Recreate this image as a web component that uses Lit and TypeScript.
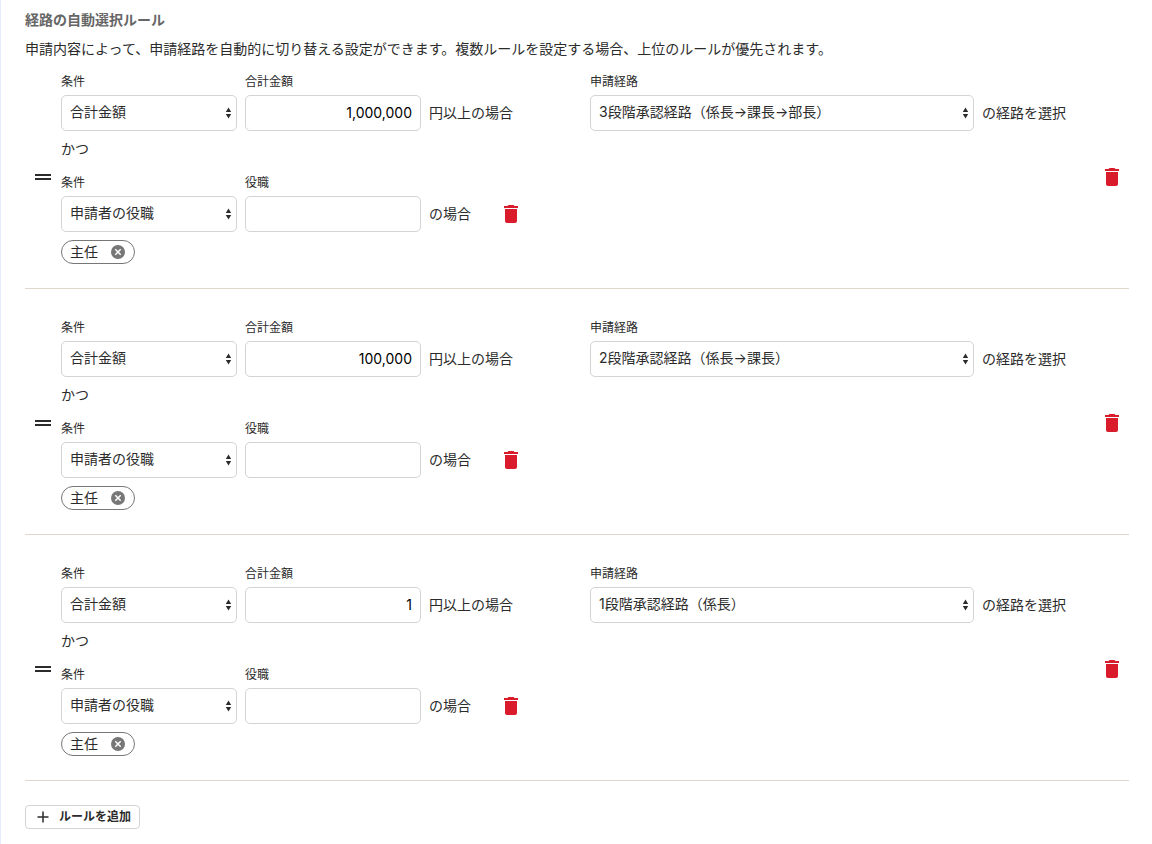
import { LitElement, css, html } from "lit";
import { customElement, property, state } from "lit/decorators.js";

interface Rule {
  id: number;
  amount: string;
  route: string;
  roles: string[];
}

const trashIcon = html`
  <svg width="24" height="24" viewBox="0 0 24 24" fill="currentColor" aria-hidden="true">
    <path d="M6 19c0 1.1.9 2 2 2h8c1.1 0 2-.9 2-2V7H6v12zM19 4h-3.500l-1-1h-5l-1 1H5v2h14V4z" />
  </svg>
`;

@customElement("select-box")
class SelectBox extends LitElement {
  @property() label = "";
  @property({ attribute: false }) options: string[] = [];
  @property() value = "";

  static styles = css`
    :host {
      display: block;
    }
    label {
      display: block;
      font-size: 12px;
      line-height: 22px;
      margin-bottom: 2px;
    }
    .box {
      display: grid;
      align-items: center;
    }
    select {
      grid-area: 1 / 1;
      appearance: none;
      box-sizing: border-box;
      width: 100%;
      height: 36px;
      margin: 0;
      padding: 0 24px 2px 8px;
      border: 1px solid #d4d4d4;
      border-radius: 5px;
      background: #fff;
      color: #2b2b2b;
      font: inherit;
      font-size: 14px;
    }
    svg {
      grid-area: 1 / 1;
      justify-self: end;
      margin-right: 5px;
      pointer-events: none;
    }
  `;

  render() {
    return html`
      <label for="select">${this.label}</label>
      <div class="box">
        <select id="select">
          ${this.options.map((o) => html`<option ?selected=${o === this.value}>${o}</option>`)}
        </select>
        <svg width="7" height="12" viewBox="0 0 7 12" fill="#2b2b2b" aria-hidden="true">
          <path d="M3.500 0.500L6.200 5H0.800zM3.500 11.500L0.800 7H6.200z" />
        </svg>
      </div>
    `;
  }
}

@customElement("app-root")
class AppRoot extends LitElement {
  @state() rules: Rule[] = [
    { id: 1, amount: "1,000,000", route: "3段階承認経路（係長→課長→部長）", roles: ["主任"] },
    { id: 2, amount: "100,000", route: "2段階承認経路（係長→課長）", roles: ["主任"] },
    { id: 3, amount: "1", route: "1段階承認経路（係長）", roles: ["主任"] },
  ];

  static styles = css`
    :host {
      display: block;
      box-sizing: border-box;
      min-height: 100vh;
      padding: 10px 23px 15px 24px;
      border-left: 1px solid #e4eefc;
      background: #fff;
      color: #2b2b2b;
      font-family: Inter, "Noto Sans CJK JP", sans-serif;
      font-size: 14px;
      line-height: 20px;
    }
    h2 {
      margin: 0 0 8px;
      color: #666;
      font-size: 14px;
      font-weight: 700;
    }
    p {
      margin: 0;
    }
    .lead {
      margin-bottom: 8px;
      line-height: 21px;
    }
    ul {
      margin: 0;
      padding: 0;
      list-style: none;
    }
    button {
      display: inline-flex;
      align-items: center;
      justify-content: center;
      margin: 0;
      padding: 0;
      border: 0;
      background: none;
      color: inherit;
      font: inherit;
      cursor: pointer;
    }
    .rule {
      display: flex;
      align-items: center;
      padding-bottom: 2px;
      border-bottom: 1px solid #ddd8c9;
    }
    .rule + .rule {
      padding-top: 24px;
    }
    .handle {
      width: 36px;
      height: 24px;
      cursor: move;
    }
    .trash {
      width: 32px;
      height: 24px;
      color: #da1b2b;
    }
    .rule > .trash {
      width: 34px;
    }
    .content {
      flex: 1;
      display: grid;
      grid-template-columns: 1fr 1fr;
      gap: 24px;
      padding: 4px 0 22px;
    }
    .row {
      display: flex;
      align-items: flex-end;
      gap: 8px;
    }
    .short {
      width: 176px;
    }
    .long {
      flex: 0 1 384px;
    }
    .field label {
      display: block;
      margin-bottom: 2px;
      font-size: 12px;
      line-height: 22px;
    }
    input {
      display: block;
      box-sizing: border-box;
      width: 100%;
      height: 36px;
      margin: 0;
      padding: 0 8px 2px;
      border: 1px solid #d4d4d4;
      border-radius: 5px;
      background: #fff;
      color: #000;
      font: inherit;
    }
    .amount {
      text-align: right;
    }
    .suffix {
      display: flex;
      align-items: center;
      gap: 24px;
      height: 36px;
      white-space: nowrap;
    }
    .and {
      margin: 8px 0 13px;
    }
    .chips {
      display: flex;
      gap: 8px;
      margin-top: 8px;
    }
    .chip {
      display: flex;
      align-items: center;
      gap: 12px;
      box-sizing: border-box;
      height: 24px;
      padding: 0 8px;
      border: 1px solid #777;
      border-radius: 12px;
    }
    .add {
      gap: 7px;
      box-sizing: border-box;
      height: 24px;
      margin-top: 24px;
      padding: 0 8px;
      border: 1px solid #d4d4d4;
      border-radius: 4px;
      font-size: 12px;
      font-weight: 700;
    }
  `;

  private removeRule(id: number) {
    this.rules = this.rules.filter((r) => r.id !== id);
  }

  private removeRole(id: number, role: string) {
    this.rules = this.rules.map((r) =>
      r.id === id ? { ...r, roles: r.roles.filter((x) => x !== role) } : r
    );
  }

  private addRule() {
    const id = Math.max(0, ...this.rules.map((r) => r.id)) + 1;
    this.rules = [...this.rules, { id, amount: "", route: "1段階承認経路（係長）", roles: [] }];
  }

  private renderRule(rule: Rule) {
    const kinds = ["合計金額", "申請者の役職"];
    return html`
      <li class="rule">
        <button class="handle" type="button" aria-label="並べ替え">
          <svg width="16" height="6" viewBox="0 0 16 6" fill="#2b2b2b" aria-hidden="true">
            <path d="M0 0h16v2H0zM0 4h16v2H0z" />
          </svg>
        </button>
        <div class="content">
          <div>
            <div class="row">
              <select-box class="short" label="条件" .options=${kinds} value="合計金額"></select-box>
              <div class="field short">
                <label for="amount-${rule.id}">合計金額</label>
                <input id="amount-${rule.id}" class="amount" type="text" inputmode="numeric" .value=${rule.amount} />
              </div>
              <span class="suffix">円以上の場合</span>
            </div>
            <p class="and">かつ</p>
            <div class="row">
              <select-box class="short" label="条件" .options=${kinds} value="申請者の役職"></select-box>
              <div class="field short">
                <label for="role-${rule.id}">役職</label>
                <input id="role-${rule.id}" type="text" />
              </div>
              <span class="suffix">
                の場合
                <button class="trash" type="button" aria-label="条件を削除">${trashIcon}</button>
              </span>
            </div>
            <div class="chips">
              ${rule.roles.map(
                (role) => html`
                  <span class="chip">
                    ${role}
                    <button type="button" aria-label="${role}を外す" @click=${() => this.removeRole(rule.id, role)}>
                      <svg width="16" height="16" viewBox="0 0 16 16" aria-hidden="true">
                        <circle cx="8" cy="8" r="7" fill="#777" />
                        <path d="M5.300 5.300l5.400 5.400M10.700 5.300l-5.400 5.400" stroke="#fff" stroke-width="1.500" />
                      </svg>
                    </button>
                  </span>
                `
              )}
            </div>
          </div>
          <div>
            <div class="row">
              <select-box class="long" label="申請経路" .options=${[rule.route]} .value=${rule.route}></select-box>
              <span class="suffix">の経路を選択</span>
            </div>
          </div>
        </div>
        <button class="trash" type="button" aria-label="ルールを削除" @click=${() => this.removeRule(rule.id)}>
          ${trashIcon}
        </button>
      </li>
    `;
  }

  render() {
    return html`
      <h2>経路の自動選択ルール</h2>
      <p class="lead">
        申請内容によって、申請経路を自動的に切り替える設定ができます。複数ルールを設定する場合、上位のルールが優先されます。
      </p>
      <ul>
        ${this.rules.map((rule) => this.renderRule(rule))}
      </ul>
      <button class="add" type="button" @click=${this.addRule}>
        <svg width="18" height="18" viewBox="0 0 18 18" aria-hidden="true">
          <path d="M9 3.500v11M3.500 9h11" stroke="#2b2b2b" stroke-width="1.500" />
        </svg>
        ルールを追加
      </button>
    `;
  }
}
